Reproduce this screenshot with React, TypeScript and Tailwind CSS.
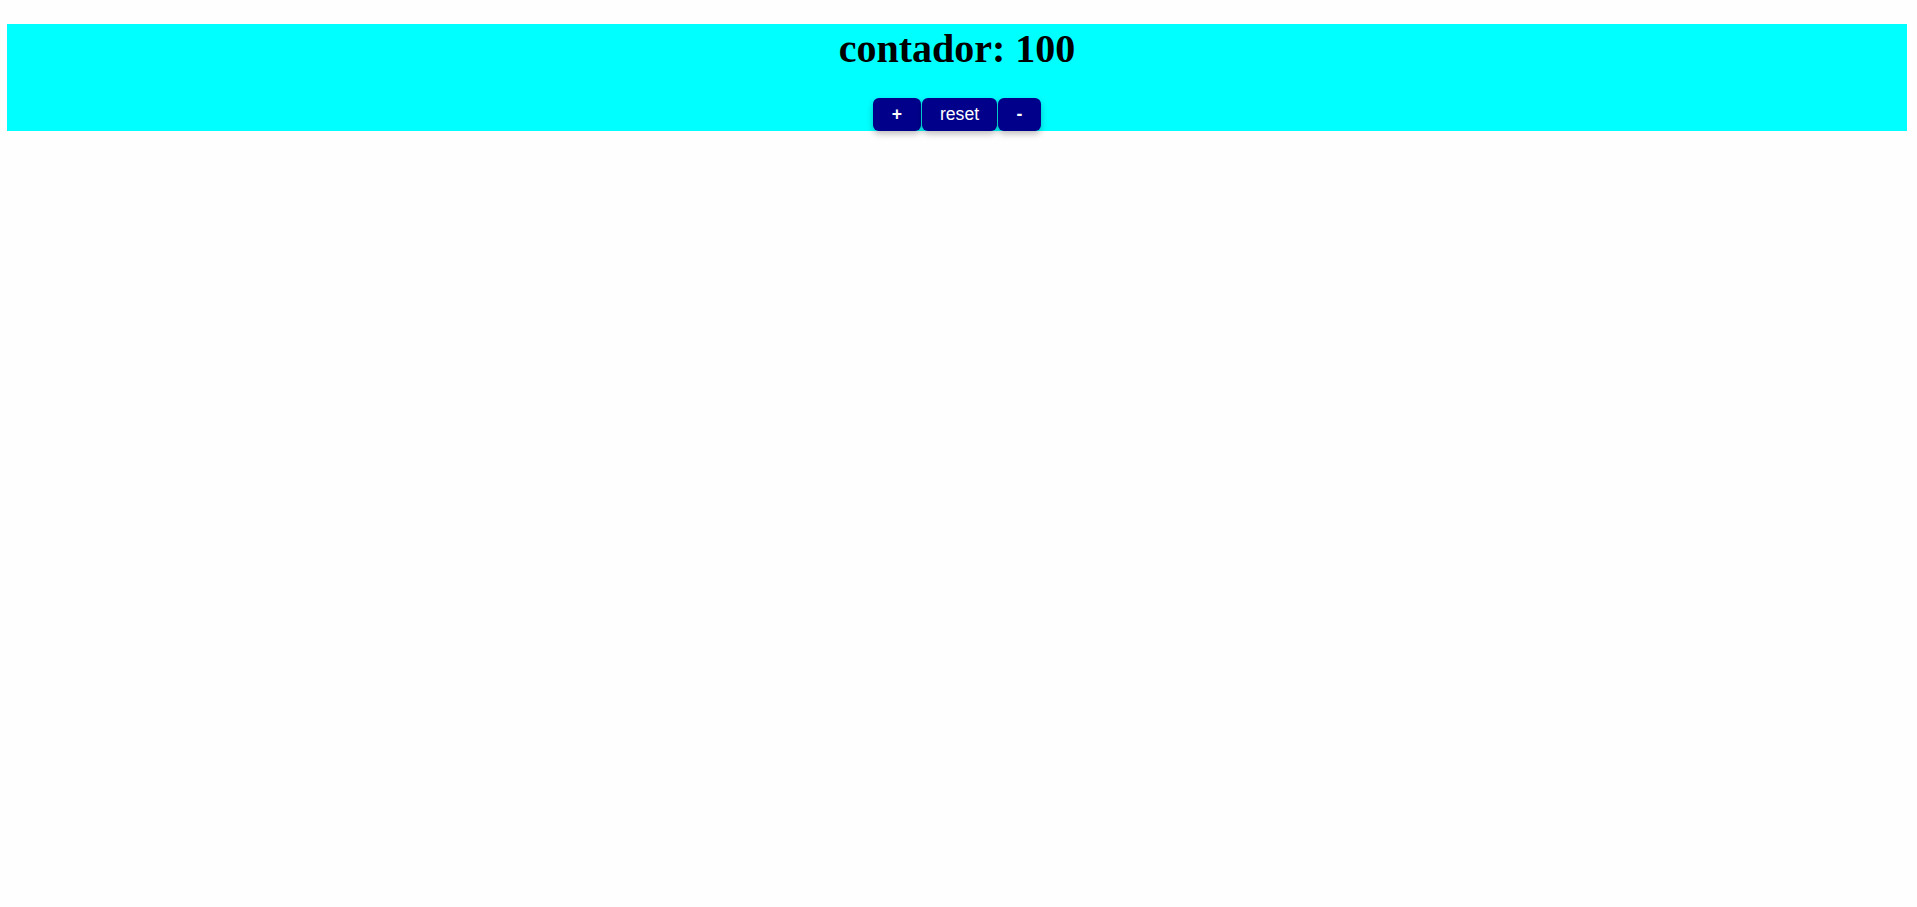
export default function App() {
  return (
    <div className="min-h-screen bg-[#fefefe] pt-[24px] pl-[7px] pr-[10px]">
      <div className="flex h-[107px] flex-col items-center bg-[#00ffff]">
        <h1 className="font-['Liberation_Serif',serif] text-[40px] font-bold leading-[50px] text-black">
          contador: 100
        </h1>

        <div className="mt-[24px] flex gap-[1px] font-['Liberation_Sans',Arial,sans-serif] text-[17.6px] text-white">
          <button className="h-[33px] w-[48px] rounded-[6px] bg-[#00008b] font-bold shadow-[0_3px_6px_rgba(0,0,0,0.25)]">
            +
          </button>
          <button className="h-[33px] w-[75px] rounded-[6px] bg-[#00008b] shadow-[0_3px_6px_rgba(0,0,0,0.25)]">
            reset
          </button>
          <button className="h-[33px] w-[43px] rounded-[6px] bg-[#00008b] font-bold shadow-[0_3px_6px_rgba(0,0,0,0.25)]">
            -
          </button>
        </div>
      </div>
    </div>
  );
}
